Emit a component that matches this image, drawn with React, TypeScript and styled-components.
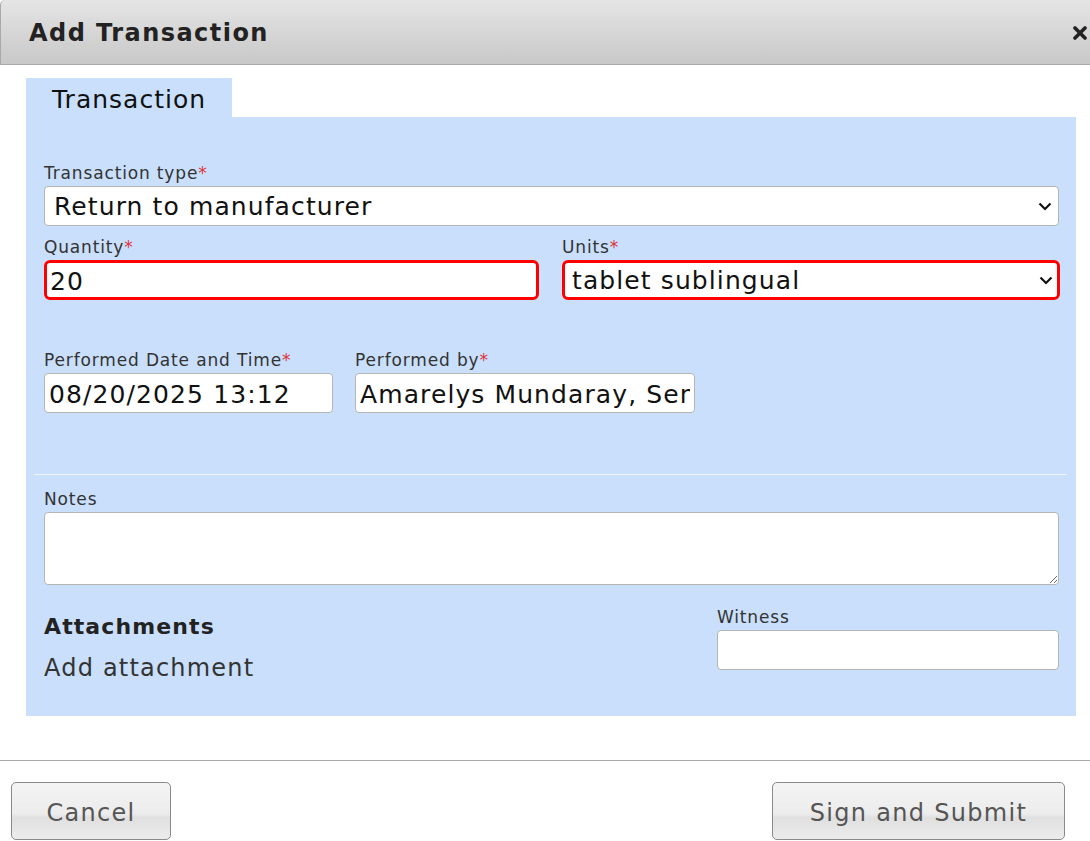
import React from "react";
import styled, { createGlobalStyle } from "styled-components";

const Global = createGlobalStyle`
  html, body { margin: 0; padding: 0; background: #fff; }
  body { font-family: "DejaVu Sans", Verdana, sans-serif; color: #222; }
  * { box-sizing: border-box; }
`;

const Dialog = styled.div`
  width: 1090px;
  height: 841px;
  display: flex;
  flex-direction: column;
  overflow: hidden;
`;

const Header = styled.div`
  height: 65px;
  flex: none;
  display: flex;
  align-items: center;
  justify-content: space-between;
  padding: 0 2px 0 28px;
  background: linear-gradient(#e5e5e5, #c8c8c8);
  border: 1px solid #a9a9a9;
  border-right: none;
  border-top: none;
  border-radius: 5px 0 0 0;
`;

const Title = styled.h1`
  margin: 0;
  font-size: 24px;
  font-weight: bold;
  color: #222;
  letter-spacing: 1.45px;
  padding-top: 2px;
`;

const Close = styled.button`
  border: none;
  background: none;
  padding: 0;
  width: 16px;
  height: 16px;
  display: flex;
  align-items: center;
  justify-content: center;
  margin-top: 2px;
`;

const Body = styled.div`
  padding: 13px 14px 0 26px;
  flex: none;
`;

const Tab = styled.div`
  width: 206px;
  height: 39px;
  background: #c9dffb;
  padding-left: 26px;
  display: flex;
  align-items: center;
  font-size: 25px;
  letter-spacing: 1px;
  color: #111;
  padding-top: 4px;
`;

const Panel = styled.div`
  background: #c9dffb;
  padding: 44px 17px 0 18px;
  height: 599px;
  display: flex;
  flex-direction: column;
`;

const Field = styled.div<{ $w?: number }>`
  display: flex;
  flex-direction: column;
  ${(p) => (p.$w ? `width: ${p.$w}px;` : "")}
`;

const Label = styled.label`
  font-size: 17px;
  line-height: 20px;
  letter-spacing: 0.85px;
  color: #333;
  margin-bottom: 3px;
  padding-top: 2px;
`;

const Req = styled.span`
  color: #e0333a;
`;

const fieldText = `
  font-family: "DejaVu Sans", Verdana, sans-serif;
  font-size: 25px;
  letter-spacing: 1.1px;
  color: #111;
  background: #fff;
  outline: none;
`;

const SelectWrap = styled.div`
  position: relative;
  width: 100%;
`;

const Chevron = styled.svg`
  position: absolute;
  right: 7px;
  top: 16px;
  pointer-events: none;
`;

const Select = styled.select<{ $error?: boolean }>`
  ${fieldText}
  appearance: none;
  -webkit-appearance: none;
  height: 40px;
  width: 100%;
  border: ${(p) => (p.$error ? "3px solid #ff0000" : "1px solid #b5b5b5")};
  border-radius: ${(p) => (p.$error ? "6px" : "4px")};
  padding: 0 ${(p) => (p.$error ? "7px" : "9px")};
`;

const Input = styled.input<{ $error?: boolean }>`
  ${fieldText}
  height: 40px;
  width: 100%;
  border: ${(p) => (p.$error ? "3px solid #ff0000" : "1px solid #b5b5b5")};
  border-radius: ${(p) => (p.$error ? "6px" : "4px")};
  padding: 2px ${(p) => (p.$error ? "3px" : "4px")} 0;
`;

const TextArea = styled.textarea`
  height: 73px;
  width: 100%;
  border: 1px solid #b5b5b5;
  border-radius: 4px;
  background: #fff;
  font-family: "DejaVu Sans", Verdana, sans-serif;
  font-size: 16px;
  resize: vertical;
  display: block;
`;

const Row = styled.div<{ $cols: string; $gap: number; $mt: number }>`
  display: grid;
  grid-template-columns: ${(p) => p.$cols};
  column-gap: ${(p) => p.$gap}px;
  margin-top: ${(p) => p.$mt}px;
`;

const Divider = styled.hr`
  border: none;
  height: 1px;
  background: #eef4fd;
  margin: 61px -8px 0 -10px;
`;

const Section = styled.div<{ $mt: number }>`
  margin-top: ${(p) => p.$mt}px;
`;

const BottomRow = styled.div`
  display: flex;
  justify-content: space-between;
  margin-top: 20px;
`;

const AttachCol = styled.div`
  display: flex;
  flex-direction: column;
  padding-top: 8px;
`;

const AttachTitle = styled.div`
  font-size: 22px;
  font-weight: bold;
  letter-spacing: 1.1px;
  color: #222;
  line-height: 28px;
`;

const AttachLink = styled.div`
  font-size: 24px;
  letter-spacing: 1.2px;
  color: #333;
  line-height: 30px;
  margin-top: 12px;
`;

const Footer = styled.div`
  margin-top: 44px;
  border-top: 1px solid #a9a9a9;
  padding: 21px 25px 0 11px;
  display: flex;
  justify-content: space-between;
`;

const Button = styled.button<{ $w: number }>`
  width: ${(p) => p.$w}px;
  height: 58px;
  font-family: "DejaVu Sans", Verdana, sans-serif;
  font-size: 24px;
  letter-spacing: 1.3px;
  color: #555;
  background: linear-gradient(#f4f4f4 0%, #ececec 55%, #e0e0e0 62%, #ececec 100%);
  border: 1px solid #8a8a8a;
  border-radius: 5px;
  padding: 3px 0 0;
`;

function Dropdown({ value, error }: { value: string; error?: boolean }) {
  return (
    <SelectWrap>
      <Select $error={error} defaultValue={value}>
        <option value={value}>{value}</option>
      </Select>
      <Chevron width="14" height="9" viewBox="0 0 14 9">
        <path d="M1.5 1.5 L7 7 L12.5 1.5" stroke="#111" strokeWidth="2.2" fill="none" />
      </Chevron>
    </SelectWrap>
  );
}

export default function App() {
  return (
    <>
      <Global />
      <Dialog>
        <Header>
          <Title>Add Transaction</Title>
          <Close aria-label="close">
            <svg width="14" height="14" viewBox="0 0 14 14">
              <path d="M2 2 L12 12 M12 2 L2 12" stroke="#222" strokeWidth="3.6" strokeLinecap="round" />
            </svg>
          </Close>
        </Header>
        <Body>
          <Tab>Transaction</Tab>
          <Panel>
            <Field>
              <Label>
                Transaction type<Req>*</Req>
              </Label>
              <Dropdown value="Return to manufacturer" />
            </Field>
            <Row $cols="495px 498px" $gap={23} $mt={9}>
              <Field>
                <Label>
                  Quantity<Req>*</Req>
                </Label>
                <Input $error defaultValue="20" />
              </Field>
              <Field>
                <Label>
                  Units<Req>*</Req>
                </Label>
                <Dropdown value="tablet sublingual" error />
              </Field>
            </Row>
            <Row $cols="289px 340px" $gap={22} $mt={48}>
              <Field>
                <Label>
                  Performed Date and Time<Req>*</Req>
                </Label>
                <Input defaultValue="08/20/2025 13:12" />
              </Field>
              <Field>
                <Label>
                  Performed by<Req>*</Req>
                </Label>
                <Input defaultValue="Amarelys Mundaray, Senior Pharmacist" />
              </Field>
            </Row>
            <Divider />
            <Section $mt={12}>
              <Field>
                <Label>Notes</Label>
                <TextArea />
              </Field>
            </Section>
            <BottomRow>
              <AttachCol>
                <AttachTitle>Attachments</AttachTitle>
                <AttachLink>Add attachment</AttachLink>
              </AttachCol>
              <Field $w={342}>
                <Label>Witness</Label>
                <Input />
              </Field>
            </BottomRow>
          </Panel>
        </Body>
        <Footer>
          <Button $w={160}>Cancel</Button>
          <Button $w={293}>Sign and Submit</Button>
        </Footer>
      </Dialog>
    </>
  );
}
